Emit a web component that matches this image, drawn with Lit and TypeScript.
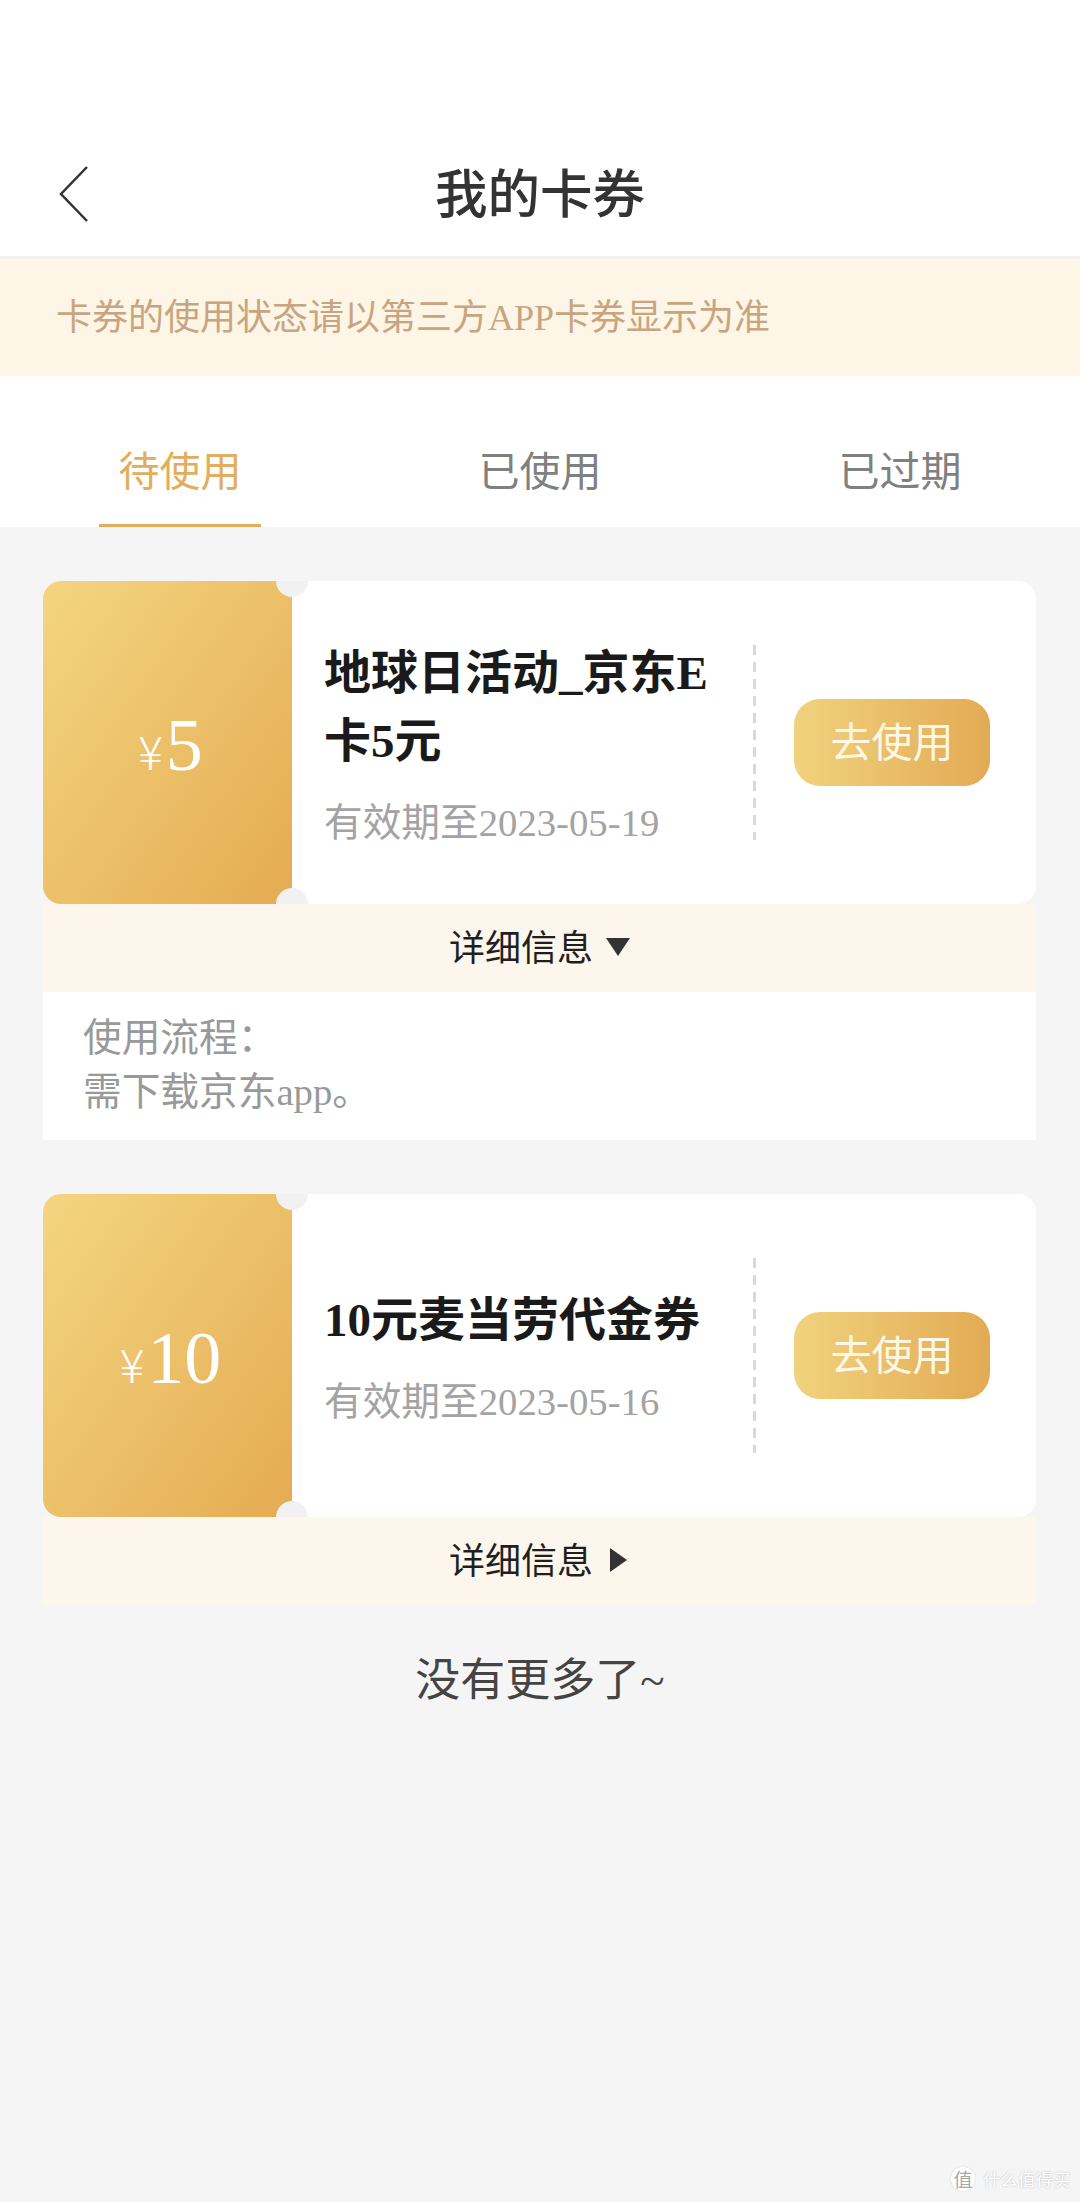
import { LitElement, html, css, svg } from "lit";
import { customElement } from "lit/decorators.js";

interface Coupon {
  amount: string;
  title: string;
  date: string;
  open: boolean;
  details?: string[];
}

const COUPONS: Coupon[] = [
  {
    amount: "5",
    title: "地球日活动_京东E卡5元",
    date: "有效期至2023-05-19",
    open: true,
    details: ["使用流程：", "需下载京东app。"],
  },
  {
    amount: "10",
    title: "10元麦当劳代金券",
    date: "有效期至2023-05-16",
    open: false,
  },
];

@customElement("app-root")
export class AppRoot extends LitElement {
  static styles = css`
    :host {
      display: block;
      position: relative;
      width: 1080px;
      height: 2202px;
      overflow: hidden;
      background: #f5f5f5;
      font-family: "Liberation Serif", "Noto Sans CJK SC", serif;
    }
    .header {
      box-sizing: border-box;
      height: 259px;
      padding-top: 130px;
      background: #fff;
      display: grid;
      grid-template-columns: 1fr auto 1fr;
      align-items: center;
      border-bottom: 3px solid #f3f1ee;
    }
    .back {
      margin-left: 58px;
      width: 32px;
      height: 56px;
      display: block;
    }
    .title {
      font-size: 52.5px;
      line-height: 126px;
      font-weight: 500;
      color: #333;
      padding-top: 2px;
    }
    .notice {
      height: 117px;
      box-sizing: border-box;
      padding: 0 0 8px 56px;
      display: flex;
      align-items: center;
      background: #fdf5e6;
      color: #c8a580;
      font-size: 36px;
    }
    .tabs {
      height: 151px;
      background: #fff;
      display: grid;
      grid-template-columns: repeat(3, 360px);
    }
    .tab {
      display: flex;
      flex-direction: column;
      align-items: center;
      justify-content: flex-end;
      font-size: 41px;
      color: #808080;
    }
    .tab span {
      line-height: 58px;
      margin-bottom: 23px;
    }
    .tab.active {
      color: #e2ad5c;
    }
    .tab i {
      display: block;
      width: 162px;
      height: 3px;
      background: transparent;
    }
    .tab.active i {
      background: #e2ad5c;
    }
    .list {
      padding: 54px 44px 0 43px;
      display: flex;
      flex-direction: column;
      gap: 54px;
    }
    .card {
      position: relative;
      height: 323px;
      display: flex;
      align-items: center;
      background: #fff;
      border-radius: 18px;
      overflow: hidden;
    }
    .face {
      align-self: stretch;
      width: 249px;
      flex: none;
      background: linear-gradient(125deg, #f4d581 0%, #e4ab52 100%);
      color: #fff;
      display: flex;
      align-items: baseline;
      justify-content: center;
      padding: 127px 0 0 6px;
      box-sizing: border-box;
      line-height: 1;
    }
    .yen {
      font-family: "Noto Sans CJK SC", sans-serif;
      font-size: 46px;
      font-weight: 300;
      margin-right: 3px;
    }
    .num {
      font-size: 74px;
    }
    .notch {
      position: absolute;
      left: 233px;
      width: 32px;
      height: 32px;
      border-radius: 50%;
      background: #f1f1f1;
    }
    .notch.top {
      top: -16px;
    }
    .notch.bottom {
      bottom: -16px;
    }
    .info {
      width: 398px;
      flex: none;
      margin-left: 32px;
    }
    .name {
      font-size: 47px;
      line-height: 68px;
      font-weight: 700;
      color: #1a1a1a;
    }
    .date {
      margin-top: 24px;
      font-size: 38.7px;
      line-height: 48px;
      color: #a3a3a3;
    }
    .dash {
      flex: none;
      width: 3px;
      height: 195px;
      margin-left: 31px;
      background: repeating-linear-gradient(to bottom, #d9d9d9 0 10px, transparent 10px 17px);
    }
    .use {
      flex: none;
      width: 196px;
      height: 87px;
      padding-bottom: 7px;
      box-sizing: border-box;
      margin-left: 38px;
      border-radius: 26px;
      background: linear-gradient(90deg, #f1d27e 0%, #e3aa54 100%);
      color: #fff8e6;
      font-size: 41px;
      display: flex;
      align-items: center;
      justify-content: center;
    }
    .bar {
      height: 88px;
      box-sizing: border-box;
      padding-bottom: 7px;
      background: #fdf6ed;
      display: flex;
      align-items: center;
      justify-content: center;
      gap: 13px;
      font-size: 36px;
      color: #1f1f1f;
    }
    .bar svg {
      display: block;
      width: 24px;
      height: 24px;
      margin-top: 4px;
      fill: #333;
    }
    .details {
      height: 148px;
      box-sizing: border-box;
      padding: 19px 40px 0;
      background: #fff;
      font-size: 38.7px;
      line-height: 54px;
      color: #999;
    }
    .end {
      margin-top: 48px;
      text-align: center;
      font-size: 45px;
      line-height: 56px;
      color: #444;
    }
    .mark {
      position: absolute;
      left: 951px;
      top: 2167px;
      display: flex;
      align-items: center;
      gap: 8px;
      font-family: "Noto Sans CJK SC", sans-serif;
      color: #fff;
      font-size: 17.5px;
      line-height: 24px;
      text-shadow: 0 0 2px #b5b5b5;
    }
    .mark b {
      width: 24px;
      height: 24px;
      border-radius: 50%;
      background: #fff;
      box-shadow: 0 0 2px #cfcfcf;
      color: #a8a8a8;
      font-weight: 400;
      font-size: 19px;
      text-align: center;
      text-shadow: none;
    }
  `;

  private renderCoupon(c: Coupon) {
    return html`
      <section>
        <div class="card">
          <div class="face"><span class="yen">¥</span><span class="num">${c.amount}</span></div>
          <i class="notch top"></i>
          <i class="notch bottom"></i>
          <div class="info">
            <div class="name">${c.title}</div>
            <div class="date">${c.date}</div>
          </div>
          <div class="dash"></div>
          <div class="use">去使用</div>
        </div>
        <div class="bar">
          <span>详细信息</span>
          <svg viewBox="0 0 24 24">
            ${c.open
              ? svg`<polygon points="0,3 24,3 12,21"></polygon>`
              : svg`<polygon points="4,0 21,12 4,24"></polygon>`}
          </svg>
        </div>
        ${c.details ? html`<div class="details">${c.details.map((l) => html`<div>${l}</div>`)}</div>` : ""}
      </section>
    `;
  }

  render() {
    return html`
      <header class="header">
        <svg class="back" viewBox="0 0 32 56" fill="none" stroke="#333" stroke-width="2.5">
          <polyline points="29,1 3,28 29,55"></polyline>
        </svg>
        <div class="title">我的卡券</div>
        <div></div>
      </header>
      <div class="notice">卡券的使用状态请以第三方APP卡券显示为准</div>
      <nav class="tabs">
        <div class="tab active"><span>待使用</span><i></i></div>
        <div class="tab"><span>已使用</span><i></i></div>
        <div class="tab"><span>已过期</span><i></i></div>
      </nav>
      <div class="list">${COUPONS.map((c) => this.renderCoupon(c))}</div>
      <div class="end">没有更多了~</div>
      <div class="mark"><b>值</b><span>什么值得买</span></div>
    `;
  }
}
